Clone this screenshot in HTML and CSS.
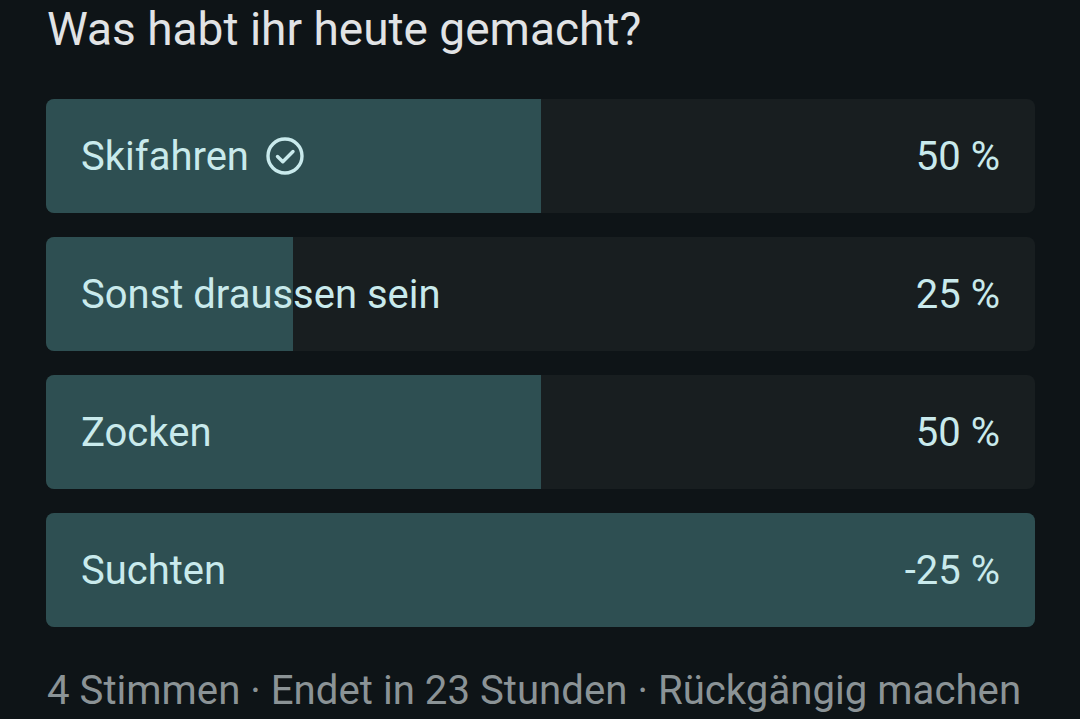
FILE: index.html
```html
<!DOCTYPE html>
<html lang="de">
<head>
<meta charset="utf-8">
<link rel="stylesheet" href="styles.css">
</head>
<body>
<div class="poll">
  <h1 class="question">Was habt ihr heute gemacht?</h1>
  <div class="options">
    <div class="option">
      <div class="fill" style="width:50%"></div>
      <div class="row">
        <span class="label">Skifahren
          <svg class="check" viewBox="0 0 40 40" width="40" height="40"><circle cx="20" cy="20" r="17" fill="none" stroke="currentColor" stroke-width="3.4"/><path d="M12.5 20.5 L17.8 25.8 L28 15.5" fill="none" stroke="currentColor" stroke-width="3.4" stroke-linecap="round" stroke-linejoin="round"/></svg>
        </span>
        <span class="pct">50 %</span>
      </div>
    </div>
    <div class="option">
      <div class="fill" style="width:25%"></div>
      <div class="row">
        <span class="label">Sonst draussen sein</span>
        <span class="pct">25 %</span>
      </div>
    </div>
    <div class="option">
      <div class="fill" style="width:50%"></div>
      <div class="row">
        <span class="label">Zocken</span>
        <span class="pct">50 %</span>
      </div>
    </div>
    <div class="option">
      <div class="fill" style="width:100%"></div>
      <div class="row">
        <span class="label">Suchten</span>
        <span class="pct">-25 %</span>
      </div>
    </div>
  </div>
  <div class="meta">4 Stimmen · Endet in 23 Stunden · Rückgängig machen</div>
</div>
</body>
</html>
```
FILE: styles.css
```css
html, body {
  margin: 0;
  padding: 0;
  background: #0e1417;
}
body {
  font-family: Roboto, "Noto Sans", sans-serif;
  width: 1080px;
  height: 719px;
  overflow: hidden;
}
.poll {
  padding: 0 45px 0 46px;
  display: flex;
  flex-direction: column;
}
.question {
  margin: -1px 0 0 0;
  font-weight: 400;
  font-size: 46px;
  line-height: 60px;
  color: #e1e3e5;
  padding-left: 1px;
  height: 100px;
}
.options {
  display: flex;
  flex-direction: column;
  gap: 24px;
}
.option {
  position: relative;
  height: 114px;
  background: #181e20;
  border-radius: 8px;
  overflow: hidden;
}
.fill {
  position: absolute;
  top: 0;
  left: 0;
  bottom: 0;
  background: #2e4f52;
}
.row {
  position: relative;
  height: 100%;
  display: flex;
  align-items: center;
  justify-content: space-between;
  padding: 0 35px;
  color: #c9eaec;
  font-size: 40px;
}
.label {
  display: flex;
  align-items: center;
  gap: 16px;
}
.check {
  width: 40px;
  height: 40px;
  color: #c9eaec;
}
.meta {
  margin-top: 40px;
  padding-left: 1px;
  color: #8b9396;
  font-size: 40.2px;
  line-height: 48px;
  white-space: nowrap;
}
```
